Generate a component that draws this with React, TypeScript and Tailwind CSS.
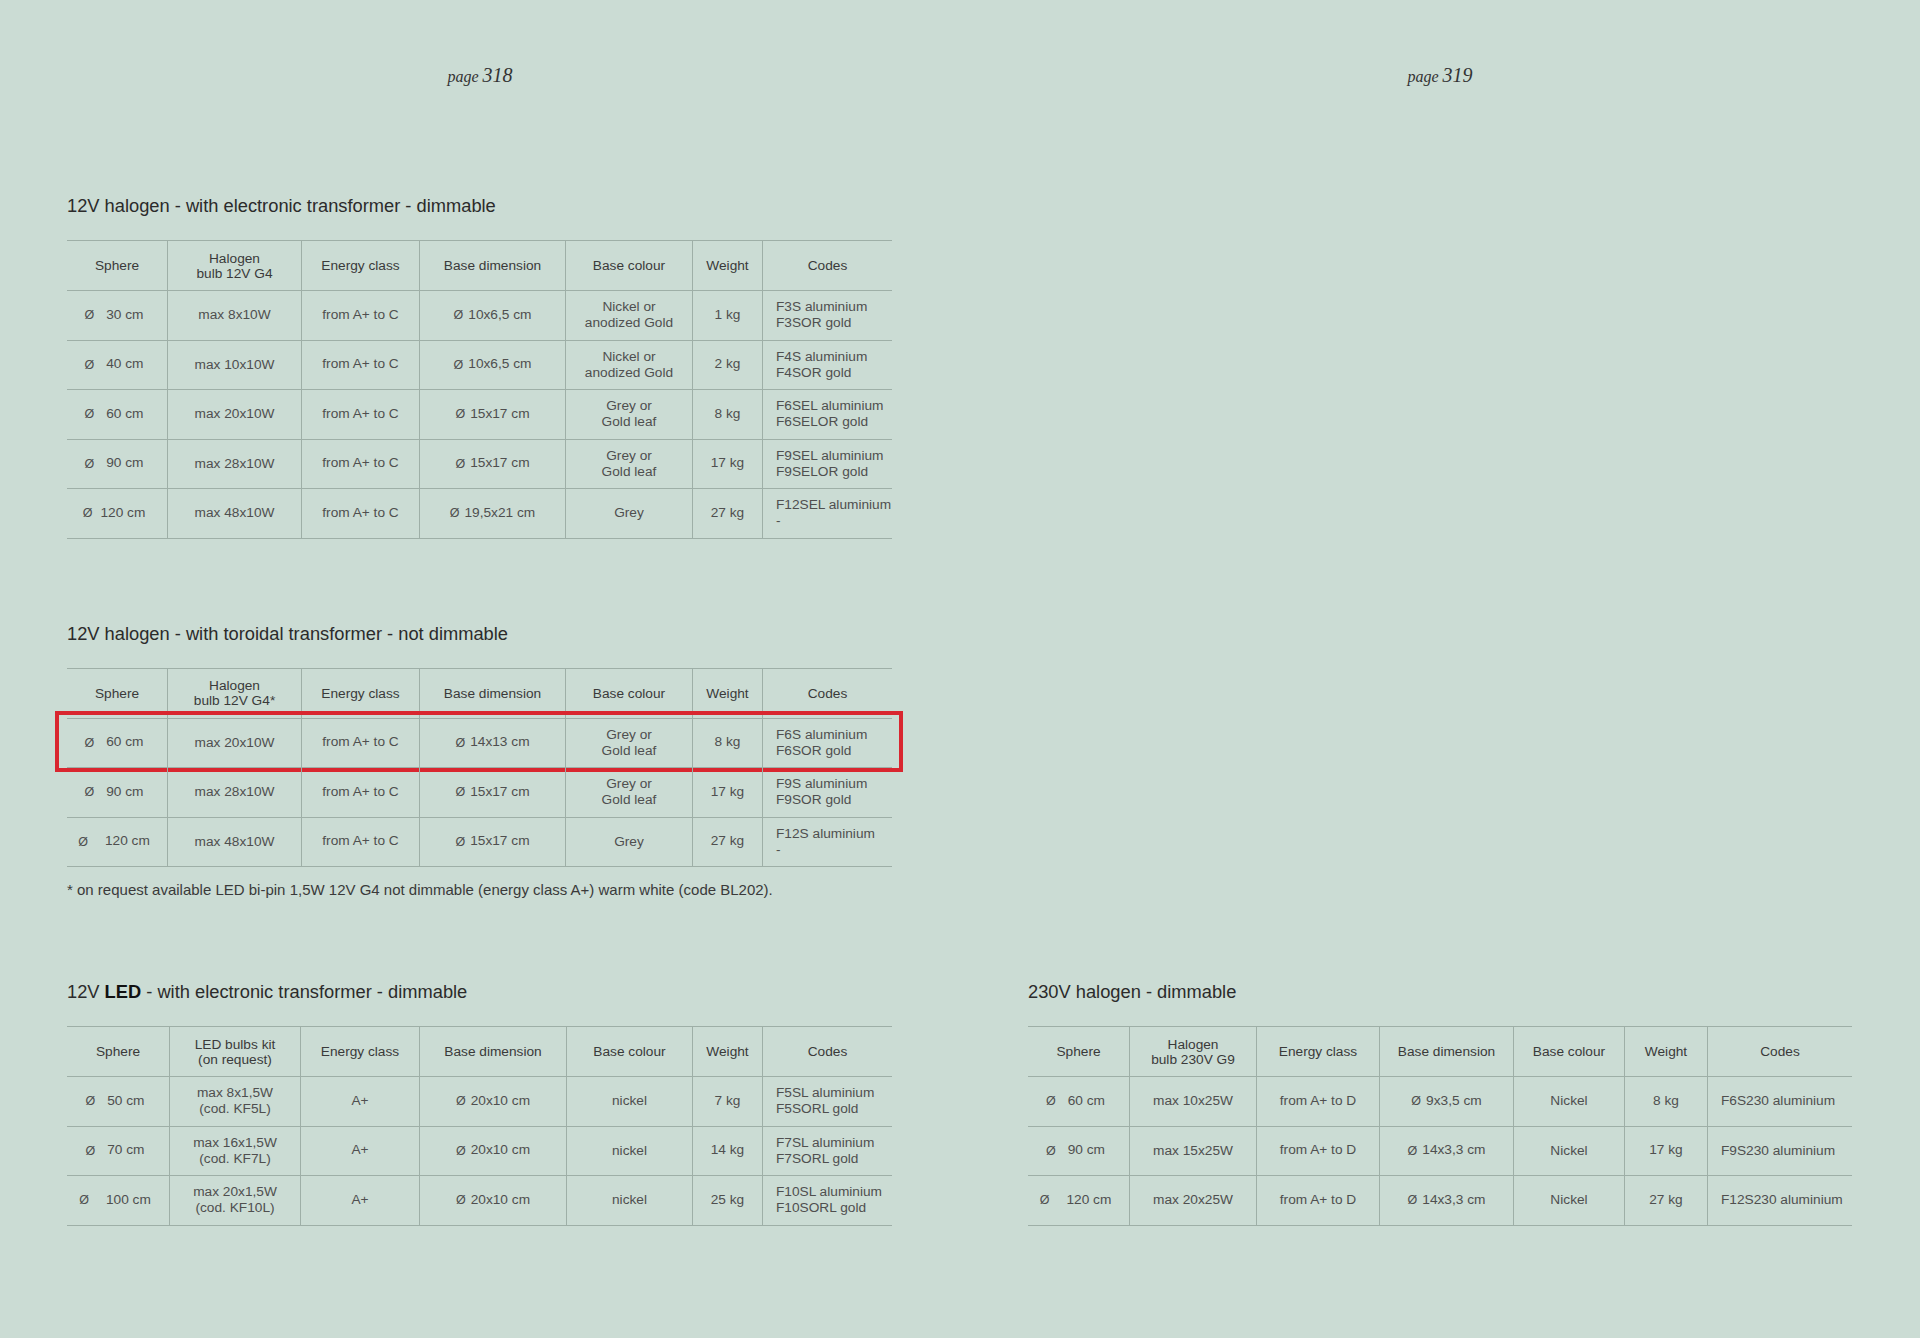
import React from "react";

type Row = {
  sphere: string;
  gap: number;
  cells: string[]; // bulb, energy, base dim (without Ø), colour, weight
  codes: string;
};

type TableDef = {
  cols: string;
  header: string[];
  rows: Row[];
  highlightFirst?: boolean;
};

const gapClass: Record<number, string> = {
  9: "ml-[8px]",
  13: "ml-[12px]",
  18: "ml-[17px]",
};

const COLS_A = "grid-cols-[100px_134px_118px_146px_127px_70px_130px]";
const COLS_B = "grid-cols-[102px_131px_119px_147px_126px_70px_130px]";
const COLS_C = "grid-cols-[101px_127px_123px_134px_111px_83px_145px]";

const t1: TableDef = {
  cols: COLS_A,
  header: ["Sphere", "Halogen\nbulb 12V G4", "Energy class", "Base dimension", "Base colour", "Weight", "Codes"],
  rows: [
    { sphere: "30 cm", gap: 13, cells: ["max 8x10W", "from A+ to C", "10x6,5 cm", "Nickel or\nanodized Gold", "1 kg"], codes: "F3S aluminium\nF3SOR gold" },
    { sphere: "40 cm", gap: 13, cells: ["max 10x10W", "from A+ to C", "10x6,5 cm", "Nickel or\nanodized Gold", "2 kg"], codes: "F4S aluminium\nF4SOR gold" },
    { sphere: "60 cm", gap: 13, cells: ["max 20x10W", "from A+ to C", "15x17 cm", "Grey or\nGold leaf", "8 kg"], codes: "F6SEL aluminium\nF6SELOR gold" },
    { sphere: "90 cm", gap: 13, cells: ["max 28x10W", "from A+ to C", "15x17 cm", "Grey or\nGold leaf", "17 kg"], codes: "F9SEL aluminium\nF9SELOR gold" },
    { sphere: "120 cm", gap: 9, cells: ["max 48x10W", "from A+ to C", "19,5x21 cm", "Grey", "27 kg"], codes: "F12SEL aluminium\n-" },
  ],
};

const t2: TableDef = {
  cols: COLS_A,
  highlightFirst: true,
  header: ["Sphere", "Halogen\nbulb 12V G4*", "Energy class", "Base dimension", "Base colour", "Weight", "Codes"],
  rows: [
    { sphere: "60 cm", gap: 13, cells: ["max 20x10W", "from A+ to C", "14x13 cm", "Grey or\nGold leaf", "8 kg"], codes: "F6S aluminium\nF6SOR gold" },
    { sphere: "90 cm", gap: 13, cells: ["max 28x10W", "from A+ to C", "15x17 cm", "Grey or\nGold leaf", "17 kg"], codes: "F9S aluminium\nF9SOR gold" },
    { sphere: "120 cm", gap: 18, cells: ["max 48x10W", "from A+ to C", "15x17 cm", "Grey", "27 kg"], codes: "F12S aluminium\n-" },
  ],
};

const t3: TableDef = {
  cols: COLS_B,
  header: ["Sphere", "LED bulbs kit\n(on request)", "Energy class", "Base dimension", "Base colour", "Weight", "Codes"],
  rows: [
    { sphere: "50 cm", gap: 13, cells: ["max 8x1,5W\n(cod. KF5L)", "A+", "20x10 cm", "nickel", "7 kg"], codes: "F5SL aluminium\nF5SORL gold" },
    { sphere: "70 cm", gap: 13, cells: ["max 16x1,5W\n(cod. KF7L)", "A+", "20x10 cm", "nickel", "14 kg"], codes: "F7SL aluminium\nF7SORL gold" },
    { sphere: "100 cm", gap: 18, cells: ["max 20x1,5W\n(cod. KF10L)", "A+", "20x10 cm", "nickel", "25 kg"], codes: "F10SL aluminium\nF10SORL gold" },
  ],
};

const t4: TableDef = {
  cols: COLS_C,
  header: ["Sphere", "Halogen\nbulb 230V G9", "Energy class", "Base dimension", "Base colour", "Weight", "Codes"],
  rows: [
    { sphere: "60 cm", gap: 13, cells: ["max 10x25W", "from A+ to D", "9x3,5 cm", "Nickel", "8 kg"], codes: "F6S230 aluminium" },
    { sphere: "90 cm", gap: 13, cells: ["max 15x25W", "from A+ to D", "14x3,3 cm", "Nickel", "17 kg"], codes: "F9S230 aluminium" },
    { sphere: "120 cm", gap: 18, cells: ["max 20x25W", "from A+ to D", "14x3,3 cm", "Nickel", "27 kg"], codes: "F12S230 aluminium" },
  ],
};

const Diam = () => <span className="text-[12.5px] leading-none">Ø</span>;

function SpecTable({ def }: { def: TableDef }) {
  return (
    <div className="border-t border-[#9eafa7] text-[13.7px] text-[#4f4f4f] w-fit">
      <div className={`grid ${def.cols} h-[50px] border-b border-[#9eafa7] text-[#3a3a3a]`}>
        {def.header.map((h, i) => (
          <div
            key={i}
            className={`flex items-center justify-center text-center whitespace-pre-line leading-[15px] ${i > 0 ? "border-l border-[#9eafa7]" : ""}`}
          >
            {h}
          </div>
        ))}
      </div>
      {def.rows.map((r, ri) => (
        <div key={ri} className={`relative grid ${def.cols} h-[49.5px] border-b border-[#9eafa7]`}>
          <div className="flex items-center justify-center pr-[6px] whitespace-pre">
            <Diam />
            <span className={gapClass[r.gap]}>{r.sphere}</span>
          </div>
          <div className="flex items-center justify-center text-center whitespace-pre-line leading-[16px] border-l border-[#9eafa7]">
            {r.cells[0]}
          </div>
          <div className="flex items-center justify-center text-center border-l border-[#9eafa7]">
            {r.cells[1]}
          </div>
          <div className="flex items-center justify-center whitespace-pre border-l border-[#9eafa7]">
            <Diam />
            <span className="ml-[5px]">{r.cells[2]}</span>
          </div>
          <div className="flex items-center justify-center text-center whitespace-pre-line leading-[16px] border-l border-[#9eafa7]">
            {r.cells[3]}
          </div>
          <div className="flex items-center justify-center border-l border-[#9eafa7]">
            {r.cells[4]}
          </div>
          <div className="flex items-center pl-[13px] whitespace-pre-line leading-[16px] border-l border-[#9eafa7]">
            {r.codes}
          </div>
          {def.highlightFirst && ri === 0 && (
            <div className="pointer-events-none absolute -top-[8px] -bottom-[5px] -left-[12px] -right-[11px] border-4 border-[#d9262f]" />
          )}
        </div>
      ))}
    </div>
  );
}

function Title({ children }: { children: React.ReactNode }) {
  return <h2 className="text-[18.3px] leading-[24px] text-[#2b2b2b]">{children}</h2>;
}

function PageNo({ n }: { n: string }) {
  return (
    <div className="h-[24px] mt-[60px] flex items-baseline justify-center text-[#333] italic" style={{ fontFamily: '"Liberation Serif", "Times New Roman", serif' }}>
      <span className="text-[16px]">page</span>
      <span className="text-[20px] ml-[4px]">{n}</span>
    </div>
  );
}

export default function App() {
  return (
    <div
      className="w-[1920px] h-[1338px] bg-[#cbdcd4] overflow-hidden"
      style={{ fontFamily: '"Liberation Sans", Arial, Helvetica, sans-serif' }}
    >
      <div className="grid grid-cols-[960px_960px]">
        <PageNo n="318" />
        <PageNo n="319" />
      </div>
      <div className="pl-[67px]">
        <div className="mt-[110px]">
          <Title>12V halogen - with electronic transformer - dimmable</Title>
          <div className="mt-[22px]">
            <SpecTable def={t1} />
          </div>
        </div>
        <div className="mt-[83px]">
          <Title>12V halogen - with toroidal transformer - not dimmable</Title>
          <div className="mt-[22px]">
            <SpecTable def={t2} />
          </div>
          <p className="mt-[13px] text-[15px] leading-[20px] text-[#3a3a3a]">
            * on request available LED bi-pin 1,5W 12V G4 not dimmable (energy class A+) warm white (code BL202).
          </p>
        </div>
      </div>
      <div className="grid grid-cols-[960px_960px] mt-[80px]">
        <div className="pl-[67px]">
          <Title>
            12V <span className="font-black text-[#111]">LED</span> - with electronic transformer - dimmable
          </Title>
          <div className="mt-[22px]">
            <SpecTable def={t3} />
          </div>
        </div>
        <div className="pl-[68px]">
          <Title>230V halogen - dimmable</Title>
          <div className="mt-[22px]">
            <SpecTable def={t4} />
          </div>
        </div>
      </div>
    </div>
  );
}
